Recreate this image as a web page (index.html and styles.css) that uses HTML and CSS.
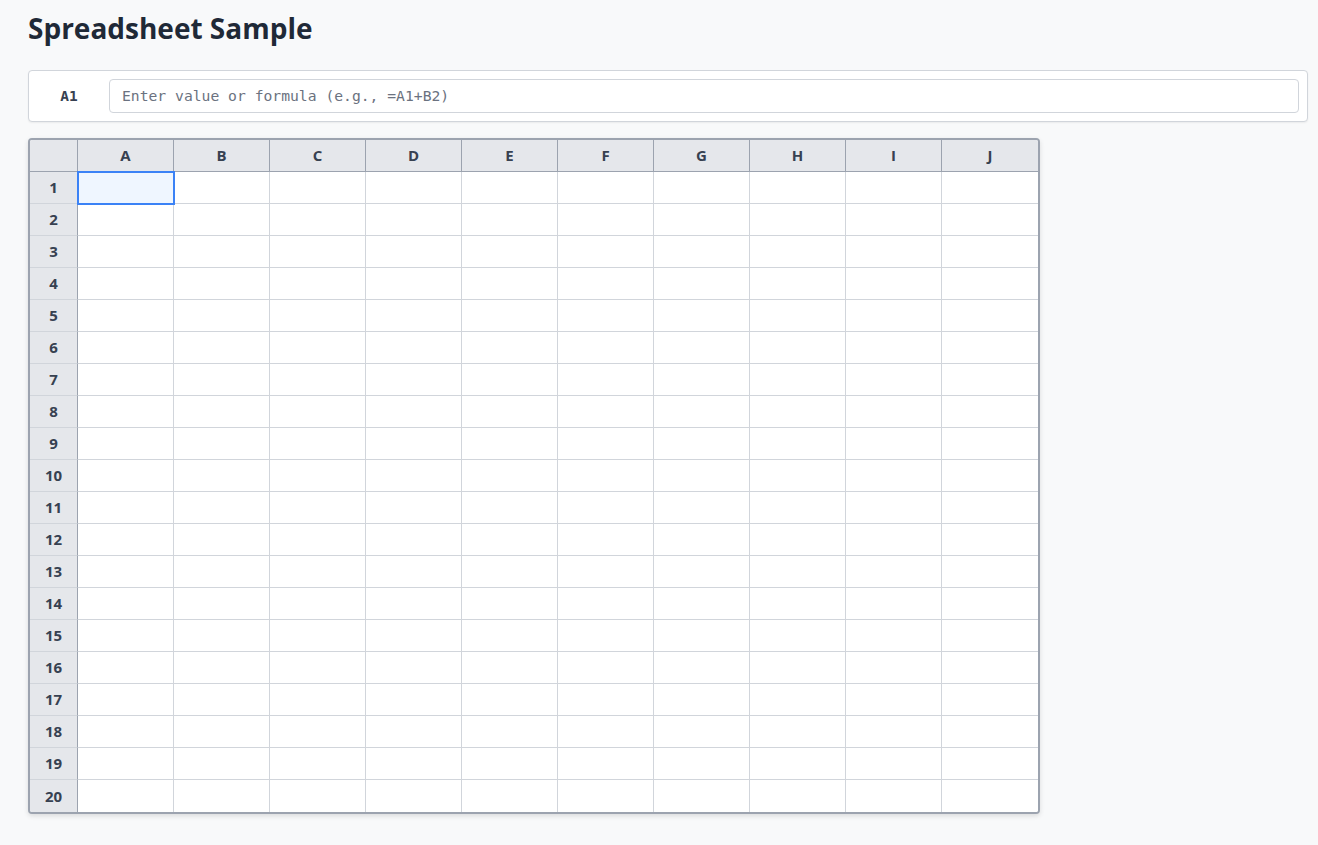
FILE: index.html
```html
<!DOCTYPE html>
<html lang="en">
<head>
<meta charset="utf-8">
<title>Spreadsheet Sample</title>
<link rel="stylesheet" href="styles.css">
</head>
<body>
<div class="page">
  <h1 class="title">Spreadsheet Sample</h1>
  <div class="formula-bar">
    <div class="cell-ref">A1</div>
    <input class="formula-input" type="text" placeholder="Enter value or formula (e.g., =A1+B2)">
  </div>
  <div class="sheet">
    <table class="grid">
      <thead>
        <tr><th class="corner"></th><th>A</th><th>B</th><th>C</th><th>D</th><th>E</th><th>F</th><th>G</th><th>H</th><th>I</th><th>J</th></tr>
      </thead>
      <tbody>
        <tr><th>1</th><td class="selected"></td><td></td><td></td><td></td><td></td><td></td><td></td><td></td><td></td><td></td></tr>
        <tr><th>2</th><td></td><td></td><td></td><td></td><td></td><td></td><td></td><td></td><td></td><td></td></tr>
        <tr><th>3</th><td></td><td></td><td></td><td></td><td></td><td></td><td></td><td></td><td></td><td></td></tr>
        <tr><th>4</th><td></td><td></td><td></td><td></td><td></td><td></td><td></td><td></td><td></td><td></td></tr>
        <tr><th>5</th><td></td><td></td><td></td><td></td><td></td><td></td><td></td><td></td><td></td><td></td></tr>
        <tr><th>6</th><td></td><td></td><td></td><td></td><td></td><td></td><td></td><td></td><td></td><td></td></tr>
        <tr><th>7</th><td></td><td></td><td></td><td></td><td></td><td></td><td></td><td></td><td></td><td></td></tr>
        <tr><th>8</th><td></td><td></td><td></td><td></td><td></td><td></td><td></td><td></td><td></td><td></td></tr>
        <tr><th>9</th><td></td><td></td><td></td><td></td><td></td><td></td><td></td><td></td><td></td><td></td></tr>
        <tr><th>10</th><td></td><td></td><td></td><td></td><td></td><td></td><td></td><td></td><td></td><td></td></tr>
        <tr><th>11</th><td></td><td></td><td></td><td></td><td></td><td></td><td></td><td></td><td></td><td></td></tr>
        <tr><th>12</th><td></td><td></td><td></td><td></td><td></td><td></td><td></td><td></td><td></td><td></td></tr>
        <tr><th>13</th><td></td><td></td><td></td><td></td><td></td><td></td><td></td><td></td><td></td><td></td></tr>
        <tr><th>14</th><td></td><td></td><td></td><td></td><td></td><td></td><td></td><td></td><td></td><td></td></tr>
        <tr><th>15</th><td></td><td></td><td></td><td></td><td></td><td></td><td></td><td></td><td></td><td></td></tr>
        <tr><th>16</th><td></td><td></td><td></td><td></td><td></td><td></td><td></td><td></td><td></td><td></td></tr>
        <tr><th>17</th><td></td><td></td><td></td><td></td><td></td><td></td><td></td><td></td><td></td><td></td></tr>
        <tr><th>18</th><td></td><td></td><td></td><td></td><td></td><td></td><td></td><td></td><td></td><td></td></tr>
        <tr><th>19</th><td></td><td></td><td></td><td></td><td></td><td></td><td></td><td></td><td></td><td></td></tr>
        <tr><th>20</th><td></td><td></td><td></td><td></td><td></td><td></td><td></td><td></td><td></td><td></td></tr>
      </tbody>
    </table>
  </div>
</div>
</body>
</html>
```

FILE: styles.css
```css
* { box-sizing: border-box; }

html, body {
  margin: 0;
  padding: 0;
  background: #f8f9fa;
  font-family: "Open Sans", "Noto Sans", "DejaVu Sans", sans-serif;
  color: #1f2937;
}

.page {
  padding: 12px 10px 20px 28px;
}

.title {
  margin: 0 0 24px 0;
  font-size: 28px;
  line-height: 1.2;
  font-weight: 700;
  color: #1f2937;
}

.formula-bar {
  display: flex;
  align-items: center;
  gap: 8px;
  padding: 8px;
  background: #ffffff;
  border: 1px solid #d1d5db;
  border-radius: 4px;
  box-shadow: 0 1px 2px rgba(0, 0, 0, 0.06);
  margin-bottom: 16px;
}

.cell-ref {
  width: 64px;
  flex: 0 0 64px;
  text-align: center;
  font-family: "DejaVu Sans Mono", "Liberation Mono", monospace;
  font-weight: 700;
  font-size: 14.5px;
  color: #374151;
}

.formula-input {
  flex: 1 1 auto;
  height: 34px;
  padding: 0 12px;
  border: 1px solid #d1d5db;
  border-radius: 4px;
  background: #ffffff;
  font-family: "DejaVu Sans Mono", "Liberation Mono", monospace;
  font-size: 14.7px;
  color: #1f2937;
  outline: none;
}

.formula-input::placeholder {
  color: #6b7280;
}

.sheet {
  display: inline-block;
  border: 2px solid #9ca3af;
  border-radius: 4px;
  background: #ffffff;
  box-shadow: 0 2px 5px rgba(0, 0, 0, 0.12);
  overflow: hidden;
}

.grid {
  border-collapse: separate;
  border-spacing: 0;
  table-layout: fixed;
}

.grid th,
.grid td {
  padding: 0;
  height: 32px;
  border-right: 1px solid #d1d5db;
  border-bottom: 1px solid #d1d5db;
}

.grid th {
  background: #e5e7eb;
  font-family: "Open Sans", "Noto Sans", sans-serif;
  font-size: 15px;
  font-weight: 700;
  color: #374151;
  text-align: center;
}

.grid thead th {
  width: 96px;
  border-right: 1px solid #9ca3af;
  border-bottom: 1px solid #9ca3af;
}

.grid thead th.corner {
  width: 48px;
}

.grid tbody th {
  width: 48px;
  border-right: 1px solid #9ca3af;
  border-bottom: 1px solid #d1d5db;
}

.grid tr > :last-child {
  border-right: none;
}

.grid tbody tr:last-child > * {
  border-bottom: none;
}

.grid td {
  width: 96px;
  background: #ffffff;
}

.grid td.selected {
  background: #eff6ff;
  outline: 2px solid #3b82f6;
  outline-offset: -1px;
}
```
